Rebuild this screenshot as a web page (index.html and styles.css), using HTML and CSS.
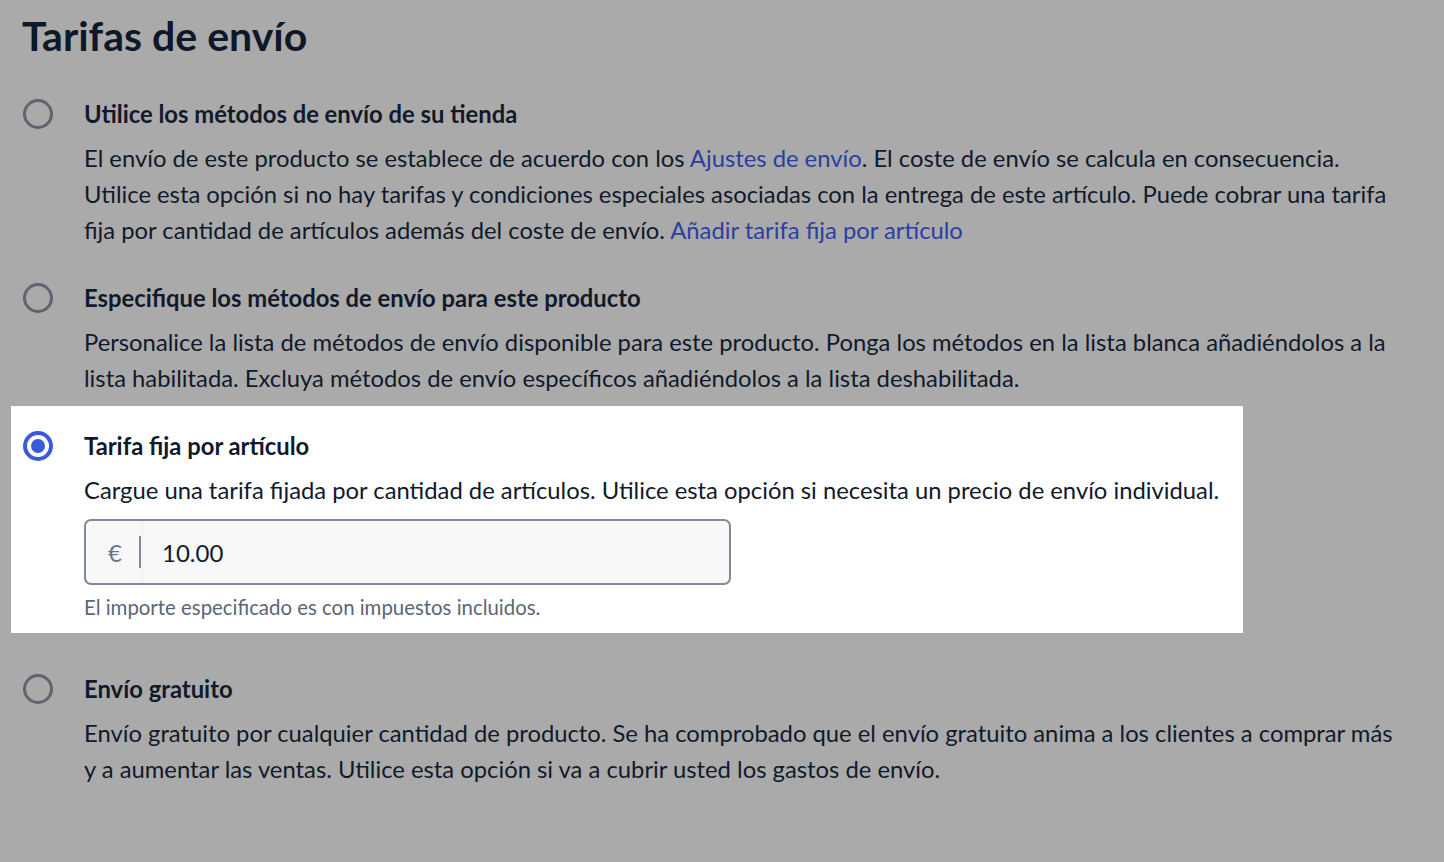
FILE: index.html
```html
<!DOCTYPE html>
<html lang="es">
<head>
<meta charset="utf-8">
<title>Tarifas de envío</title>
<link rel="stylesheet" href="styles.css">
</head>
<body>
<main class="page">
  <h1 class="title">Tarifas de envío</h1>
  <div class="options">
    <div class="option opt-store">
      <span class="radio"></span>
      <div class="content">
        <div class="label">Utilice los métodos de envío de su tienda</div>
        <p class="desc">El envío de este producto se establece de acuerdo con los <a class="link" href="#">Ajustes de envío</a>. El coste de envío se calcula en consecuencia.<br>Utilice esta opción si no hay tarifas y condiciones especiales asociadas con la entrega de este artículo. Puede cobrar una tarifa fija por cantidad de artículos además del coste de envío. <a class="link" href="#">Añadir tarifa fija por artículo</a></p>
      </div>
    </div>
    <div class="option opt-custom">
      <span class="radio"></span>
      <div class="content">
        <div class="label">Especifique los métodos de envío para este producto</div>
        <p class="desc">Personalice la lista de métodos de envío disponible para este producto. Ponga los métodos en la lista blanca añadiéndolos a la lista habilitada. Excluya métodos de envío específicos añadiéndolos a la lista deshabilitada.</p>
      </div>
    </div>
    <div class="option opt-fixed is-selected">
      <span class="radio radio-on"></span>
      <div class="content">
        <div class="label">Tarifa fija por artículo</div>
        <p class="desc">Cargue una tarifa fijada por cantidad de artículos. Utilice esta opción si necesita un precio de envío individual.</p>
        <div class="money-input">
          <span class="prefix">€</span>
          <span class="value">10.00</span>
        </div>
        <p class="help">El importe especificado es con impuestos incluidos.</p>
      </div>
    </div>
    <div class="option opt-free">
      <span class="radio"></span>
      <div class="content">
        <div class="label">Envío gratuito</div>
        <p class="desc">Envío gratuito por cualquier cantidad de producto. Se ha comprobado que el envío gratuito anima a los clientes a comprar más y a aumentar las ventas. Utilice esta opción si va a cubrir usted los gastos de envío.</p>
      </div>
    </div>
  </div>
</main>
</body>
</html>
```
FILE: styles.css
```css
* { box-sizing: border-box; }
html, body {
  margin: 0;
  padding: 0;
  background: #aaaaaa;
  height: 100%;
}
body {
  font-family: "Lato", "Liberation Sans", sans-serif;
  color: #111a2b;
  overflow: hidden;
}
.page {
  padding: 12px 11px 0 11px;
}
.title {
  margin: 0 0 0 11px;
  font-size: 41px;
  line-height: 48px;
  font-weight: 700;
  color: #0f1827;
}
.options {
  display: flex;
  flex-direction: column;
}
.option {
  display: grid;
  grid-template-columns: 30px 1320px;
  column-gap: 31px;
  padding: 0 12px;
}
.opt-store { margin-top: 36px; }
.opt-custom { margin-top: 32px; }
.opt-fixed {
  margin-top: 10px;
  padding: 22px 12px 14px 12px;
  width: 1232px;
  background: #ffffff;
  grid-template-columns: 30px 1160px;
}
.opt-free { margin-top: 38px; }

.radio {
  width: 30px;
  height: 30px;
  margin-top: 3px;
  border-radius: 50%;
  border: 3px solid #5e656e;
  position: relative;
}
.radio-on {
  border: 4px solid #3a5bd9;
}
.radio-on::after {
  content: "";
  position: absolute;
  left: 4px;
  top: 4px;
  width: 14px;
  height: 14px;
  border-radius: 50%;
  background: #3a5bd9;
}
.label {
  font-size: 23.8px;
  line-height: 36px;
  font-weight: 700;
}
.desc {
  margin: 8px 0 0 0;
  font-size: 23.8px;
  line-height: 36px;
}
.link {
  color: #2b3fa2;
  text-decoration: none;
}
.money-input {
  margin-top: 11px;
  width: 647px;
  height: 66px;
  border: 2px solid #808a99;
  border-radius: 7px;
  background: #f8f8f8;
  display: flex;
  align-items: center;
}
.prefix {
  width: 57px;
  height: 100%;
  display: flex;
  align-items: center;
  font-size: 24px;
  color: #6b7585;
  border-right: 1px solid #eceef1;
  position: relative;
  padding-left: 22px;
}
.prefix::after {
  content: "";
  position: absolute;
  right: 1px;
  top: 15px;
  bottom: 15px;
  width: 2px;
  background: #7f8999;
}
.value {
  padding-left: 19px;
  font-size: 24px;
  color: #111a2b;
}
.help {
  margin: 10px 0 0 0;
  font-size: 20.4px;
  line-height: 24px;
  color: #5b6678;
}
```
